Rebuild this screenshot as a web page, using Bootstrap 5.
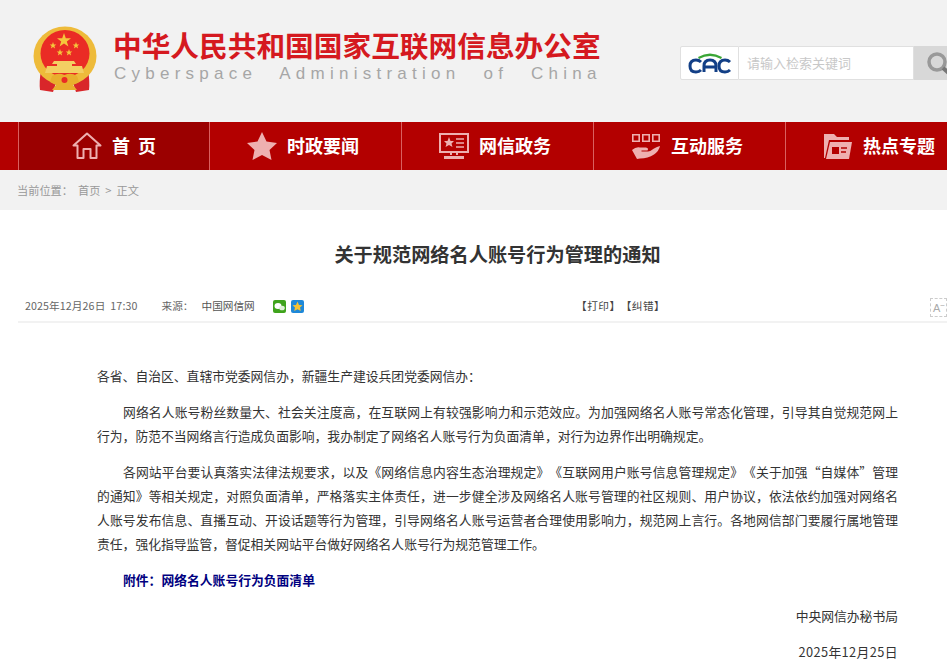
<!DOCTYPE html>
<html lang="zh-CN">
<head>
<meta charset="UTF-8">
<title>关于规范网络名人账号行为管理的通知</title>
<link rel="stylesheet" href="https://cdn.jsdelivr.net/npm/bootstrap@5.3.2/dist/css/bootstrap.min.css">
<style>
html, body { height: 672px; overflow: hidden; }
body { background: #fff; font-family: "Liberation Sans", "Noto Sans CJK SC", sans-serif; color: #333; text-spacing-trim: space-all; }
.site-head { height: 122px; background: #f2f2f2; padding: 26px 0 0 33px; }
.brand-text { margin-left: 16px; }
.brand-cn { font-family: "Noto Sans CJK SC", sans-serif; font-weight: 700; font-size: 28.7px; line-height: 34px; height: 34px; color: #d5191f; margin-top: 2px; white-space: nowrap; }
.brand-en { font-family: "Liberation Sans", sans-serif; font-size: 17px; line-height: 20px; color: #a6a6a6; letter-spacing: 5.25px; word-spacing: 13px; white-space: nowrap; margin: 2px 0 0 1px; }
.search-box { position: absolute; left: 680px; top: 46px; width: 267px; height: 34px; }
.search-logo { width: 59px; height: 34px; background: #fff; border: 1px solid #e0e0e0; border-radius: 2px 0 0 2px; }
.search-input { width: 175px; height: 34px; background: #fff; border: 1px solid #e0e0e0; border-left: 0; font-size: 13px; line-height: 32px; color: #c8c8c8; padding-left: 8px; font-family: "Noto Sans CJK SC", sans-serif; }
.search-btn { width: 33px; height: 34px; background: #d8d8d8; overflow: hidden; padding: 6px 0 0 13px; }
.main-nav { height: 48px; background: #b30000; padding-left: 18px; overflow: hidden; white-space: nowrap; }
.nav-cell { width: 192px; height: 48px; flex: none; border-left: 1px solid #d9605f; color: #fff; font-family: "Noto Sans CJK SC", sans-serif; font-weight: 700; font-size: 18px; gap: 10px; padding-right: 5px; }
.nav-cell span { margin-top: -2px; }
.nav-cell.on { background: #9b0000; width: 191px; padding-right: 0; }
.nav-cell svg { flex: none; }
.crumb { height: 40px; background: #f2f2f2; color: #999; font-size: 11.2px; line-height: 40px; padding-left: 17px; word-spacing: 2.5px; font-family: "Noto Sans CJK SC", sans-serif; }
.crumb span { margin-right: 5px; }
.art-title { font-family: "Noto Sans CJK SC", sans-serif; font-weight: 700; font-size: 19.2px; line-height: 26px; color: #333; text-align: center; margin: 31px 0 0 48px; }
.meta-row { position: relative; height: 32px; margin: 24px 0 0 18px; border-bottom: 2px solid #f2f2f2; font-size: 10.67px; line-height: 16px; color: #666; padding: 7px 0 0 7px; font-family: "Noto Sans CJK SC", sans-serif; }
.meta-date { letter-spacing: .1px; }
.meta-src { margin-left: 24px; }
.meta-name { margin-left: 8px; color: #555; }
.share-wx { margin: 2px 0 0 18px; }
.share-qz { margin: 2px 0 0 5px; }
.meta-tools { position: absolute; left: 558px; top: 7px; color: #444; letter-spacing: .5px; }
.font-tool { position: absolute; right: 0; top: 7px; width: 17px; height: 19px; border: 1px dashed #ccc; font-size: 11px; line-height: 18px; color: #aaa; padding-left: 2px; font-family: "Liberation Sans", sans-serif; }
.art-body { margin: 0 49px 0 97px; padding-top: 41px; font-size: 12.8px; line-height: 24px; color: #333; font-family: "Noto Sans CJK SC", sans-serif; }
.art-body p { margin: 0 0 12px; text-align: justify; }
.art-body .ind { text-indent: 26px; }
.art-body .att { font-weight: 700; color: #000080; }
.art-body .sign { text-align: right; }
.art-body .sign-date { letter-spacing: .4px; }
</style>
</head>
<body>
<header class="site-head d-flex position-relative">
  <svg width="64" height="68" viewBox="0 0 64 68">
    <path d="M8 44 Q6 56 7 64 L20 66 L24 54 Z M55 44 Q57 56 56 64 L43 66 L39 54 Z" fill="#d9262a"/>
    <ellipse cx="32" cy="30" rx="31.5" ry="29.5" fill="#eebb3a"/>
    <ellipse cx="32" cy="27.5" rx="24.5" ry="23.5" fill="#ea2b25"/>
    <polygon points="31,7 32.8,12.2 38,12.2 33.8,15.4 35.4,20.5 31,17.4 26.6,20.5 28.2,15.4 24,12.2 29.2,12.2" fill="#f5c63c"/>
    <polygon points="20,16 20.9,18.4 23.3,18.4 21.4,20 22.1,22.4 20,21 17.9,22.4 18.6,20 16.7,18.4 19.1,18.4" fill="#f5c63c"/>
    <polygon points="43,16 43.9,18.4 46.3,18.4 44.4,20 45.1,22.4 43,21 40.9,22.4 41.6,20 39.7,18.4 42.1,18.4" fill="#f5c63c"/>
    <polygon points="27,23 27.9,25.4 30.3,25.4 28.4,27 29.1,29.4 27,28 24.9,29.4 25.6,27 23.7,25.4 26.1,25.4" fill="#f5c63c"/>
    <polygon points="36,23 36.9,25.4 39.3,25.4 37.4,27 38.1,29.4 36,28 33.9,29.4 34.6,27 32.7,25.4 35.1,25.4" fill="#f5c63c"/>
    <path d="M21 35 H41 L43 38 H39 V40 H49 L51 47 H12 L14 40 H24 V38 H19 Z" fill="#f3cf63"/>
    <path d="M19 50 Q25 46 31.5 49 Q38 46 44 50 L46 56 L40 59 L44 64 H19 L23 59 L17 56 Z" fill="#e9ae2d"/>
    <circle cx="31.5" cy="54" r="3" fill="#ea2b25"/>
  </svg>
  <div class="brand-text">
    <div class="brand-cn">中华人民共和国国家互联网信息办公室</div>
    <div class="brand-en">Cyberspace Administration of China</div>
  </div>
  <div class="search-box d-flex">
    <div class="search-logo d-flex align-items-center justify-content-center">
      <svg width="44" height="24" viewBox="0 0 44 24">
        <path d="M10 6 Q22 -1 34 6 L33 8 Q22 2 11 8 Z" fill="#3aa635"/>
        <path d="M13 11 Q11 9 8 9 Q2 9 2 15 Q2 21 8 21 Q11 21 13 19" fill="none" stroke="#123f86" stroke-width="3"/>
        <path d="M16 21 L16 15 Q16 9 22 9 Q28 9 28 15 L28 21 M16 16 H28" fill="none" stroke="#123f86" stroke-width="3"/>
        <path d="M42 11 Q40 9 37 9 Q31 9 31 15 Q31 21 37 21 Q40 21 42 19" fill="none" stroke="#123f86" stroke-width="3"/>
      </svg>
    </div>
    <div class="search-input">请输入检索关键词</div>
    <div class="search-btn">
      <svg width="30" height="26" viewBox="0 0 30 26"><circle cx="10" cy="10" r="8" fill="none" stroke="#999" stroke-width="3.5"/><path d="M16 16 L24 23" stroke="#777" stroke-width="4"/></svg>
    </div>
  </div>
</header>
<nav class="main-nav d-flex">
  <div class="nav-cell on d-flex align-items-center justify-content-center">
    <svg width="30" height="28" viewBox="0 0 30 28"><path d="M1.5 13.5 L15 1.5 L28.5 13.5 H24.5 V26 H18.5 V17 H11.5 V26 H5.5 V13.5 Z" fill="none" stroke="#eeb0b0" stroke-width="2" stroke-linejoin="round"/></svg>
    <span>首&nbsp;&nbsp;页</span>
  </div>
  <div class="nav-cell d-flex align-items-center justify-content-center">
    <svg width="30" height="28" viewBox="0 0 30 28"><polygon points="15,0 19.5,9.5 30,11 22.5,18 24.5,28 15,23 5.5,28 7.5,18 0,11 10.5,9.5" fill="#eeb0b0"/></svg>
    <span>时政要闻</span>
  </div>
  <div class="nav-cell d-flex align-items-center justify-content-center">
    <svg width="30" height="26" viewBox="0 0 30 26"><rect x="1" y="1" width="28" height="18" fill="none" stroke="#eeb0b0" stroke-width="2"/><polygon points="10,4 11.5,8 15,8 12.5,10.5 13.5,14 10,12 6.5,14 7.5,10.5 5,8 8.5,8" fill="#eeb0b0"/><path d="M17 6 H25 M17 10 H25 M17 14 H25" stroke="#eeb0b0" stroke-width="1.6"/><path d="M12 19 V22 M18 19 V22" stroke="#eeb0b0" stroke-width="2"/><rect x="5" y="23" width="20" height="3" fill="#eeb0b0"/></svg>
    <span>网信政务</span>
  </div>
  <div class="nav-cell d-flex align-items-center justify-content-center">
    <svg width="30" height="27" viewBox="0 0 30 27"><path d="M1.8 1.8 H8.2 V8.2 H1.8 Z M11.8 1.8 H18.2 V8.2 H11.8 Z M21.8 1.8 H28.2 V8.2 H21.8 Z" fill="none" stroke="#eeb0b0" stroke-width="1.6"/><path d="M1 17 Q5 13.5 9 14.5 H15 Q18 15 16.5 17.5 H10.5 V18.5 H17 Q20 18 23 15.5 Q26 13.5 29 13 Q28 18 23 21.5 Q17 25.5 9 25.5 L6 26 Z" fill="#eeb0b0"/></svg>
    <span>互动服务</span>
  </div>
  <div class="nav-cell d-flex align-items-center justify-content-center">
    <svg width="30" height="27" viewBox="0 0 30 27"><path d="M1 1 H11 L14 4 H26 V7 H6 L2 25 H1 Z" fill="#eeb0b0"/><path d="M7 9 H29 L26 26 H3 Z" fill="#eeb0b0"/><rect x="9" y="14" width="7" height="7" fill="#b30000"/><path d="M18 15 H24 M18 19 H23" stroke="#b30000" stroke-width="1.6"/></svg>
    <span>热点专题</span>
  </div>
</nav>
<div class="crumb"><span>当前位置：</span>首页 &gt; 正文</div>
<main>
  <h1 class="art-title">关于规范网络名人账号行为管理的通知</h1>
  <div class="meta-row d-flex align-items-start">
    <span class="meta-date">2025年12月26日&nbsp; 17:30</span>
    <span class="meta-src">来源：</span><span class="meta-name">中国网信网</span>
    <svg class="share-wx" width="13" height="13" viewBox="0 0 13 13"><rect width="13" height="13" rx="2" fill="#3fa31c"/><ellipse cx="5" cy="6" rx="3.5" ry="3" fill="#fff"/><ellipse cx="9" cy="8" rx="2.8" ry="2.3" fill="#dff0d8"/></svg>
    <svg class="share-qz" width="13" height="13" viewBox="0 0 13 13"><rect width="13" height="13" rx="2" fill="#1e88d8"/><polygon points="6.5,1.5 8,5 11.5,5.3 9,7.5 9.8,11 6.5,9.2 3.2,11 4,7.5 1.5,5.3 5,5" fill="#f6c232"/></svg>
    <span class="meta-tools">【打印】【纠错】</span>
    <div class="font-tool">A<sup>−</sup></div>
  </div>
  <article class="art-body">
    <p>各省、自治区、直辖市党委网信办，新疆生产建设兵团党委网信办：</p>
    <p class="ind">网络名人账号粉丝数量大、社会关注度高，在互联网上有较强影响力和示范效应。为加强网络名人账号常态化管理，引导其自觉规范网上行为，防范不当网络言行造成负面影响，我办制定了网络名人账号行为负面清单，对行为边界作出明确规定。</p>
    <p class="ind">各网站平台要认真落实法律法规要求，以及《网络信息内容生态治理规定》《互联网用户账号信息管理规定》《关于加强“自媒体”管理的通知》等相关规定，对照负面清单，严格落实主体责任，进一步健全涉及网络名人账号管理的社区规则、用户协议，依法依约加强对网络名人账号发布信息、直播互动、开设话题等行为管理，引导网络名人账号运营者合理使用影响力，规范网上言行。各地网信部门要履行属地管理责任，强化指导监管，督促相关网站平台做好网络名人账号行为规范管理工作。</p>
    <p class="ind att">附件：网络名人账号行为负面清单</p>
    <p class="sign">中央网信办秘书局</p>
    <p class="sign sign-date">2025年12月25日</p>
  </article>
</main>
<script src="https://cdn.jsdelivr.net/npm/bootstrap@5.3.2/dist/js/bootstrap.bundle.min.js"></script>
</body>
</html>
